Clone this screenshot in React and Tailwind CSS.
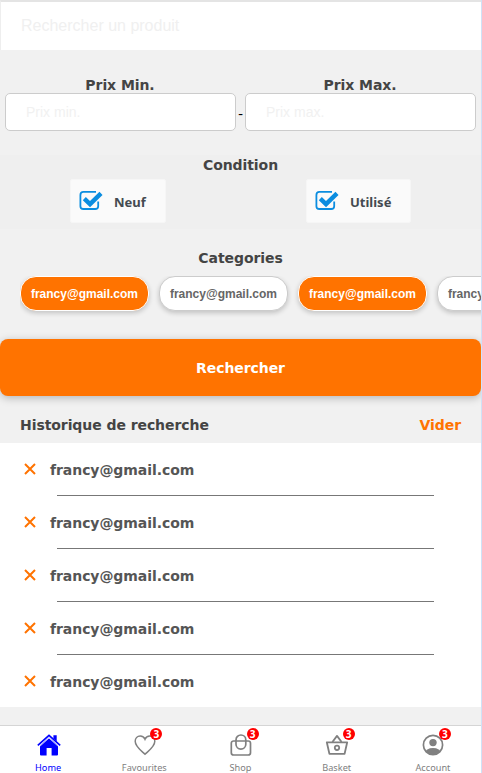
import React from "react";

const verdana = "font-['Verdana','DejaVu_Sans',sans-serif] font-bold tracking-[-0.07px]";

function Heading({ children, className = "" }) {
  return (
    <span className={`${verdana} text-[14px] leading-[18px] whitespace-nowrap text-[#444] ${className}`}>
      {children}
    </span>
  );
}

function PriceField({ label, placeholder }) {
  return (
    <label className="flex w-[231px] flex-col items-center">
      <Heading className="pr-px">{label}</Heading>
      <input
        placeholder={placeholder}
        className="-mt-px h-[38px] w-full rounded-[5px] border border-[#ccc] bg-white px-5 font-['Liberation_Sans',sans-serif] text-[14px] placeholder:text-[#f1f1f1]"
      />
    </label>
  );
}

function CheckOption({ label, className }) {
  return (
    <div className={`flex h-[44px] items-center rounded-[2px] border border-[#f6f6f6] bg-[#fafafa] pl-[8px] ${className}`}>
      <svg width="24" height="22" viewBox="0 0 24 22" className="shrink-0" fill="none" stroke="#0b8de0">
        <path d="M17 1.9H4.4Q1.4 1.9 1.4 4.9V16.2Q1.4 19 4.4 19H16.2Q19.2 19 19.2 16.2V11.5" strokeWidth="1.8" />
        <path d="M5.3 8.7L11 14.1L22 3.4" strokeWidth="4.4" />
      </svg>
      <span className="mt-[3px] ml-[11px] font-['Noto_Sans',sans-serif] text-[13px] font-bold text-[#444a50]">{label}</span>
    </div>
  );
}

function Chip({ active }) {
  return (
    <div
      className={`flex h-[35px] w-[129px] shrink-0 items-center justify-center rounded-[16px] border font-['Liberation_Sans',sans-serif] text-[12px] font-bold shadow-[0_2px_5px_rgba(0,0,0,0.2)] ${
        active ? "border-white bg-[#ff7300] text-white" : "border-[#ccc] bg-white text-[#666]"
      }`}
    >
      francy@gmail.com
    </div>
  );
}

function HistoryRow({ last }) {
  return (
    <div className={last ? "h-[52px]" : "h-[53px]"}>
      <div className="flex h-[52px] items-center pl-[24px]">
        <svg width="12" height="12" viewBox="0 0 12 12" className="shrink-0" stroke="#ff7300" strokeWidth="2">
          <path d="M1 1L11 11M11 1L1 11" />
        </svg>
        <span className={`${verdana} mt-[2px] ml-[14px] text-[14px] leading-[18px] text-[#555]`}>francy@gmail.com</span>
      </div>
      {!last && <div className="mr-[47px] ml-[57px] h-px bg-[#777]" />}
    </div>
  );
}

function HomeIcon() {
  return (
    <svg width="24" height="22" viewBox="0 0 24 22" fill="#0000ff">
      <path d="M3 11.6L12 3.6L21 11.6V20.6Q21 21.6 20 21.6H14.6V14H9.6V21.6H4Q3 21.6 3 20.6Z" />
      <path d="M0.8 11.4L12 1.3L23.2 11.4" fill="none" stroke="#0000ff" strokeWidth="1.6" />
      <path d="M3 12.1L12 4L21 12.1" fill="none" stroke="#ffffff" strokeWidth="0.8" />
      <path d="M16.4 1.2H19.7V7.4L16.4 4.4Z" />
    </svg>
  );
}

function HeartIcon() {
  return (
    <svg width="22" height="22" viewBox="0 0 22 22" fill="none" stroke="#808080" strokeWidth="1.5">
      <path d="M11 20.2C8 17.2 1.2 13 1.2 7.3C1.2 4.2 3.4 2 6.2 2C8.3 2 10.1 3.1 11 5.3C11.9 3.1 13.7 2 15.8 2C18.6 2 20.8 4.2 20.8 7.3C20.8 13 14 17.2 11 20.2Z" />
    </svg>
  );
}

function BagIcon() {
  return (
    <svg width="22" height="22" viewBox="0 0 22 22" fill="none" stroke="#808080" strokeWidth="1.7">
      <rect x="1.3" y="7" width="19.2" height="14" rx="2.3" />
      <rect x="6" y="1" width="9.8" height="14.2" rx="4.9" />
    </svg>
  );
}

function BasketIcon() {
  return (
    <svg width="24" height="22" viewBox="0 0 24 22" fill="none" stroke="#808080" strokeWidth="1.8" strokeLinejoin="round">
      <path d="M1.8 8.3H22.2L19.6 19.8H4.4Z" />
      <path d="M7.4 8L12 1.9L16.6 8" />
      <circle cx="12" cy="13.8" r="2.2" />
    </svg>
  );
}

function AccountIcon() {
  return (
    <svg width="22" height="22" viewBox="0 0 22 22">
      <clipPath id="disc">
        <circle cx="11" cy="11" r="9.6" />
      </clipPath>
      <circle cx="11" cy="11" r="9.6" fill="none" stroke="#808080" strokeWidth="1.7" />
      <circle cx="11" cy="8.6" r="3.7" fill="#808080" />
      <ellipse cx="11" cy="18.8" rx="8" ry="4.8" fill="#808080" clipPath="url(#disc)" />
    </svg>
  );
}

function NavItem({ label, icon, active }) {
  return (
    <div className={`flex flex-1 flex-col items-center ${active ? "text-[#0000ff]" : "text-[#808080]"}`}>
      <div className="relative flex h-[38px] w-[26px] items-center justify-center pl-px">
        {icon}
        {!active && (
          <span className="absolute top-[2px] left-[19px] flex size-[12px] items-center justify-center rounded-full bg-[#ff0000] font-['Noto_Sans',sans-serif] text-[10px] leading-none font-bold text-white">
            3
          </span>
        )}
      </div>
      <span className="font-['Noto_Sans',sans-serif] text-[9.2px] leading-[10px]">{label}</span>
    </div>
  );
}

export default function App() {
  return (
    <div className="flex h-[773px] w-[482px] flex-col overflow-hidden border-r border-[#cfe2f7] bg-[#f1f1f1]">
      <input
        placeholder="Rechercher un produit"
        className="h-[50px] w-full shrink-0 border-t-2 border-l border-t-[#e4e4e4] border-l-[#eee] bg-white px-5 font-['Liberation_Sans',sans-serif] text-[16px] placeholder:text-[#f0f0f0]"
      />
      <div className="flex h-[105px] shrink-0 items-start justify-between px-[5px] pt-[26px]">
        <PriceField label="Prix Min." placeholder="Prix min." />
        <span className="mt-[29px] font-['Liberation_Serif',serif] text-[14px] leading-[18px] text-black">-</span>
        <PriceField label="Prix Max." placeholder="Prix max." />
      </div>
      <div className="flex h-[74px] shrink-0 flex-col items-center bg-[#efefef] pt-px">
        <Heading>Condition</Heading>
        <div className="mt-[5px] flex w-full pl-[70px]">
          <CheckOption label="Neuf" className="w-[96px]" />
          <CheckOption label="Utilisé" className="ml-[140px] w-[105px]" />
        </div>
      </div>
      <div className="flex h-[110px] shrink-0 flex-col pt-[20px]">
        <Heading className="text-center">Categories</Heading>
        <div className="mt-[9px] ml-5 flex h-[45px] gap-[10px] overflow-hidden">
          <Chip active />
          <Chip />
          <Chip active />
          <Chip />
        </div>
      </div>
      <button
        className={`${verdana} h-[57px] w-full shrink-0 rounded-[8px] bg-[#ff7300] pt-px text-[14px] text-white shadow-[0_2px_8px_rgba(0,0,0,0.25)]`}
      >
        Rechercher
      </button>
      <div className="flex h-[47px] shrink-0 items-center justify-between px-5 pt-[11px]">
        <Heading>Historique de recherche</Heading>
        <Heading className="text-[#ff7300]!">Vider</Heading>
      </div>
      <div className="h-[264px] shrink-0 bg-white">
        <HistoryRow />
        <HistoryRow />
        <HistoryRow />
        <HistoryRow />
        <HistoryRow last />
      </div>
      <nav className="mt-[18px] flex h-[48px] shrink-0 border-t border-[#d5d5d5] bg-white">
        <NavItem label="Home" active icon={<HomeIcon />} />
        <NavItem label="Favourites" icon={<HeartIcon />} />
        <NavItem label="Shop" icon={<BagIcon />} />
        <NavItem label="Basket" icon={<BasketIcon />} />
        <NavItem label="Account" icon={<AccountIcon />} />
      </nav>
    </div>
  );
}
